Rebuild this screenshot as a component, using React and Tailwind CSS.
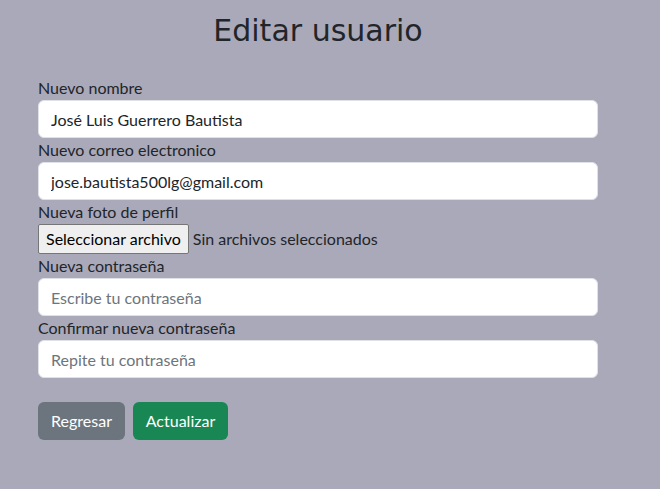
import { useState } from 'react';

const Field = ({ label, children }) => (
  <div className="flex flex-col">
    <label className="h-6 leading-6">{label}</label>
    {children}
  </div>
);

const inputClass =
  'h-[38px] w-full rounded-[6px] border border-[#dee2e6] bg-white px-3 text-base text-[#212529] placeholder:text-[#6c757d] outline-none';

const App = () => {
  const [name, setName] = useState('José Luis Guerrero Bautista');
  const [email, setEmail] = useState('jose.bautista500lg@gmail.com');
  const [pass, setPass] = useState('');
  const [pass2, setPass2] = useState('');

  return (
    <div
      className="min-h-screen w-full bg-[#aaa9b9] text-[#212529] text-base"
      style={{ fontFamily: 'Lato, "Noto Sans", sans-serif' }}
    >
      <div className="ml-[38px] w-[560px] pt-[8px]">
        <h1
          className="h-[68px] text-center text-[30px] leading-[46px]"
          style={{ fontFamily: '"Comic Sans MS", "DejaVu Sans", sans-serif' }}
        >
          Editar usuario
        </h1>

        <Field label="Nuevo nombre">
          <input className={inputClass} value={name} onChange={(e) => setName(e.target.value)} />
        </Field>
        <Field label="Nuevo correo electronico">
          <input className={inputClass} value={email} onChange={(e) => setEmail(e.target.value)} />
        </Field>
        <Field label="Nueva foto de perfil">
          <div className="flex h-[30px] items-center">
            <span className="flex h-[30px] items-center rounded-[2px] border border-[#767676] bg-[#efefef] px-[7px] text-[#000]">
              Seleccionar archivo
            </span>
            <span className="ml-[4px]">Sin archivos seleccionados</span>
          </div>
        </Field>
        <Field label="Nueva contraseña">
          <input
            type="password"
            className={inputClass}
            placeholder="Escribe tu contraseña"
            value={pass}
            onChange={(e) => setPass(e.target.value)}
          />
        </Field>
        <Field label="Confirmar nueva contraseña">
          <input
            type="password"
            className={inputClass}
            placeholder="Repite tu contraseña"
            value={pass2}
            onChange={(e) => setPass2(e.target.value)}
          />
        </Field>

        <div className="mt-6 flex gap-2">
          <button className="h-[38px] w-[87px] rounded-[6px] bg-[#6c757d] text-white">Regresar</button>
          <button className="h-[38px] w-[95px] rounded-[6px] bg-[#198754] text-white">Actualizar</button>
        </div>
      </div>
    </div>
  );
};

export default App;
